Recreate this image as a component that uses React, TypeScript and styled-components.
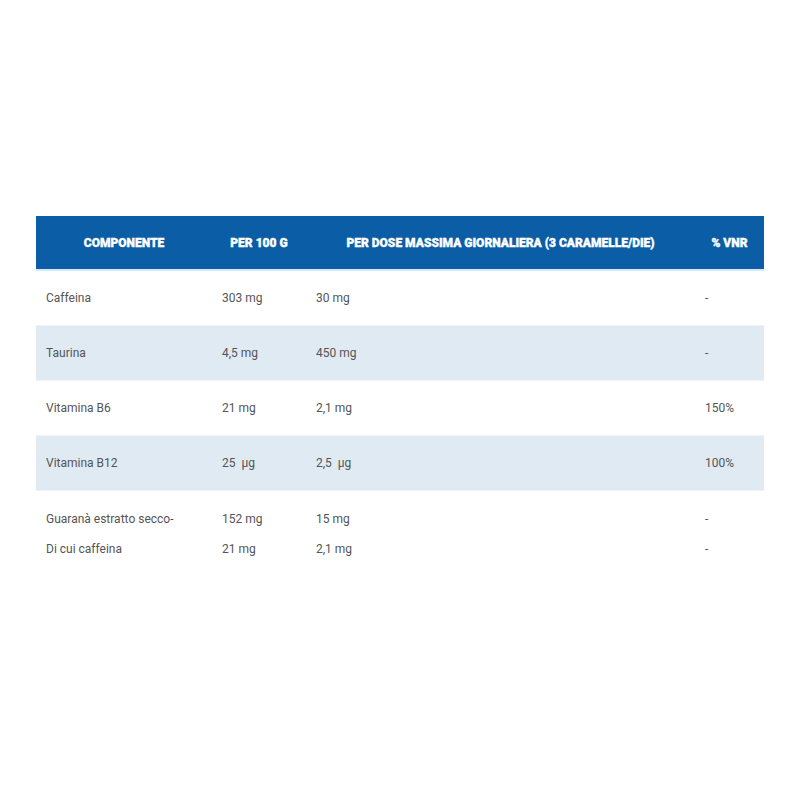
import styled, { createGlobalStyle } from 'styled-components';

const GlobalStyle = createGlobalStyle`
  html, body {
    margin: 0;
    padding: 0;
    background: #ffffff;
  }

  body {
    font-family: Roboto, "Liberation Sans", sans-serif;
  }
`;

const Page = styled.main`
  padding: 216px 36px 0;
`;

const Table = styled.table`
  border-collapse: collapse;
  table-layout: fixed;
  width: 728px;
`;

const HeadRow = styled.tr`
  background: #0b5ea6;
  border-bottom: 2px solid #d6e8f6;
`;

const HeadCell = styled.th<{ $width: number }>`
  box-sizing: border-box;
  color: #ffffff;
  font-size: 12px;
  font-weight: 900;
  height: 54px;
  padding: 0 10px;
  text-align: center;
  text-transform: uppercase;
  width: ${({ $width }) => $width}px;
  -webkit-text-stroke: 0.35px #ffffff;
`;

const Row = styled.tr<{ $shaded?: boolean; $last?: boolean }>`
  background: ${({ $shaded }) => ($shaded ? '#dfeaf3' : '#ffffff')};
  border-bottom: 1px solid ${({ $last }) => ($last ? 'transparent' : '#eef3f7')};
`;

const Cell = styled.td<{ $tall?: boolean }>`
  color: #555555;
  font-size: 12px;
  height: 54px;
  padding: 0 10px;
  vertical-align: middle;
  white-space: pre;

  ${({ $tall }) =>
    $tall &&
    `
    height: auto;
    padding-top: 13px;
    padding-bottom: 20px;
    vertical-align: top;
  `}
`;

const Line = styled.div`
  line-height: 30px;
`;

const columns = [
  { label: 'Componente', width: 176 },
  { label: 'Per 100 g', width: 94 },
  { label: 'Per dose massima giornaliera (3 caramelle/die)', width: 389 },
  { label: '% VNR', width: 69 },
];

const rows = [
  ['Caffeina', '303 mg', '30 mg', '-'],
  ['Taurina', '4,5 mg', '450 mg', '-'],
  ['Vitamina B6', '21 mg', '2,1 mg', '150%'],
  ['Vitamina B12', '25  µg', '2,5  µg', '100%'],
];

const lastRow = [
  ['Guaranà estratto secco-', 'Di cui caffeina'],
  ['152 mg', '21 mg'],
  ['15 mg', '2,1 mg'],
  ['-', '-'],
];

const App: React.FC = () => {
  return (
    <Page>
      <GlobalStyle />
      <Table>
        <thead>
          <HeadRow>
            {columns.map((col) => (
              <HeadCell key={col.label} $width={col.width}>
                {col.label}
              </HeadCell>
            ))}
          </HeadRow>
        </thead>
        <tbody>
          {rows.map((row, i) => (
            <Row key={row[0]} $shaded={i % 2 === 1}>
              {row.map((value, j) => (
                <Cell key={j}>{value}</Cell>
              ))}
            </Row>
          ))}
          <Row $last>
            {lastRow.map((lines, j) => (
              <Cell key={j} $tall>
                {lines.map((line, k) => (
                  <Line key={k}>{line}</Line>
                ))}
              </Cell>
            ))}
          </Row>
        </tbody>
      </Table>
    </Page>
  );
};

export default App;
